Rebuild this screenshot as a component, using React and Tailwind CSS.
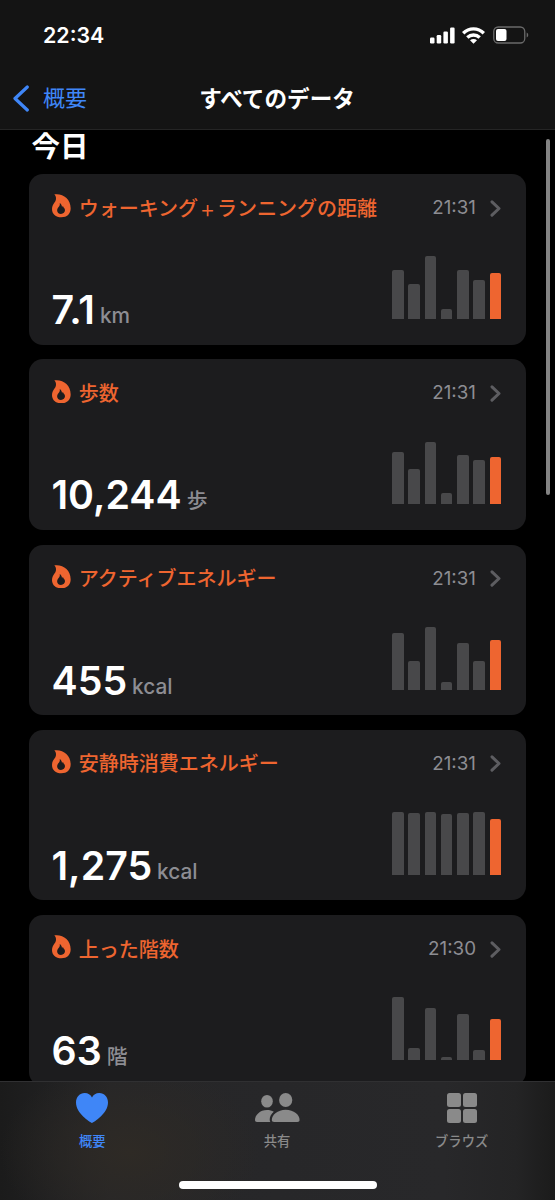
import React from 'react';

const cards = [
  { title: 'ウォーキング＋ランニングの距離', value: '7.1', unit: 'km', time: '21:31', bars: [49.3, 35, 63, 10, 49.3, 38.7, 46] },
  { title: '歩数', value: '10,244', unit: '歩', time: '21:31', bars: [52.3, 35.3, 62.5, 11, 49, 44.3, 47] },
  { title: 'アクティブエネルギー', value: '455', unit: 'kcal', time: '21:31', bars: [56.3, 29, 63, 7.3, 47, 29, 50] },
  { title: '安静時消費エネルギー', value: '1,275', unit: 'kcal', time: '21:31', bars: [62.3, 62, 62.3, 61, 62, 63, 56] },
  { title: '上った階数', value: '63', unit: '階', time: '21:30', bars: [62.7, 12, 52, 3.3, 46.3, 10, 41.3] },
];

const FlameIcon = () => (
  <svg className="h-[23.5px] w-[19px] shrink-0" viewBox="0 0 57 70.5" fill="#ee6530">
    <path
      fillRule="evenodd"
      d="M7 1C32-3 56 14 56 43C56 60 45 70 28 70C11 70 0 60 0 45C0 36 4 31 8 25C13 18 14 9 7 1ZM23 27C25 34 21 37 18 41C12 49 17 60 27 60C37 60 42 50 37 43C35 40 34 39 33 36C31 37 31 38 30 40C30 35 28 30 23 27Z"
    />
  </svg>
);

const StatusBar = () => (
  <div className="flex h-[70px] items-center justify-between pl-[43px] pr-[26px]">
    <span className="pt-px text-[21.4px] font-semibold leading-none">22:34</span>
    <div className="flex items-center">
      <svg className="h-[17px] w-[25px]" viewBox="0 0 25 17" fill="white">
        <rect x="0" y="10.5" width="4.5" height="6" rx="1.2" />
        <rect x="6.7" y="8" width="4.5" height="8.5" rx="1.2" />
        <rect x="13.4" y="4.5" width="4.5" height="12" rx="1.2" />
        <rect x="20.1" y="0.5" width="4.5" height="16" rx="1.2" />
      </svg>
      <svg className="ml-[7px] h-[17px] w-[23px]" viewBox="0 0 23 17" fill="none" stroke="white" strokeWidth="3.4">
        <path d="M1.2 6.2C7 .4 16 .4 21.8 6.2" />
        <path d="M5.3 10.6C8.9 7.2 14.1 7.2 17.7 10.6" />
        <path d="M11.5 16.8L8 13.3C10 11.5 13 11.5 15 13.3Z" fill="white" stroke="none" />
      </svg>
      <svg className="ml-[8px] h-[18px] w-[36px]" viewBox="0 0 36 18">
        <rect x="0.75" y="1" width="31" height="16" rx="4.5" fill="none" stroke="#6a6a6a" strokeWidth="1.3" />
        <rect x="3" y="3" width="10.5" height="12" rx="2" fill="white" />
        <path d="M33.7 6.5C35.7 7.3 35.7 10.7 33.7 11.5Z" fill="#6a6a6a" />
      </svg>
    </div>
  </div>
);

const Header = () => (
  <header className="h-[130px] shrink-0 border-b border-[#252525] bg-[#141414]">
    <StatusBar />
    <div className="grid h-[56px] grid-cols-3 items-center">
      <div className="flex items-center pl-[13px] text-[22px] text-[#3f86f7]">
        <svg className="mr-[14px] h-[27px] w-[16px]" viewBox="0 0 16 27" fill="none" stroke="currentColor" strokeWidth="3.2" strokeLinecap="round" strokeLinejoin="round">
          <path d="M14.3 2L2 13.5L14.3 25" />
        </svg>
        <span className="pt-px">概要</span>
      </div>
      <h1 className="-ml-px whitespace-nowrap pt-px text-center text-[22.6px] font-semibold">すべてのデータ</h1>
    </div>
  </header>
);

const CardTitle = ({ title }) => (
  <h3 className="ml-[7.7px] flex-1 whitespace-nowrap pt-[5px] text-[20px] font-medium leading-none text-[#ee6530]">
    {title.split('＋').map((part, i) => (
      <React.Fragment key={i}>
        {i > 0 && <span className="inline-block w-[19px] text-center text-[15px] font-bold">＋</span>}
        {part}
      </React.Fragment>
    ))}
  </h3>
);

const DataCard = ({ title, value, unit, time, bars }) => (
  <section className="flex h-[170.5px] shrink-0 flex-col justify-between rounded-[14px] bg-[#1c1c1e] pb-[25.5px] pl-[23px] pr-[25px] pt-[19px]">
    <div className="flex h-[26px] items-center">
      <FlameIcon />
      <CardTitle title={title} />
      <span className="mt-[5px] text-[18.8px] leading-none text-[#8d8d93]">{time}</span>
      <svg className="ml-[14px] mt-[4px] h-[17px] w-[11px]" viewBox="0 0 11 17" fill="none" stroke="#5d5d61" strokeWidth="3" strokeLinecap="round" strokeLinejoin="round">
        <path d="M2 1.8L9 8.5L2 15.2" />
      </svg>
    </div>
    <div className="flex items-end justify-between">
      <div className="-mb-[8px] -ml-[0.5px] flex items-baseline font-semibold leading-none">
        <span className="text-[39.3px] leading-[28px]">{value}</span>
        <span className="relative -top-px ml-[5px] text-[20.8px] font-medium leading-[20px] text-[#8d8d93]">{unit}</span>
      </div>
      <div className="flex h-[63px] items-end gap-[4.75px]">
        {bars.map((height, i) => (
          <div
            key={i}
            className={`w-[11.5px] rounded-t-[2px] ${i === bars.length - 1 ? 'bg-[#ee6530]' : 'bg-[#48484a]'}`}
            style={{ height }}
          />
        ))}
      </div>
    </div>
  </section>
);

const tabs = [
  {
    label: '概要',
    active: true,
    icon: (
      <svg className="h-[30px] w-[32px]" viewBox="0 0 32 30" fill="currentColor">
        <path d="M16 30C14 29 0 20.5 0 9.5C0 4 3.8 0 8.7 0C12 0 14.6 1.7 16 4.4C17.4 1.7 20 0 23.3 0C28.2 0 32 4 32 9.5C32 20.5 18 29 16 30Z" />
      </svg>
    ),
  },
  {
    label: '共有',
    icon: (
      <svg className="h-[30px] w-[45px]" viewBox="0 0 45 30" fill="currentColor">
        <ellipse cx="12" cy="8.3" rx="5.8" ry="6.3" />
        <path d="M2 29C.7 29 0 28.2 0 27C0 22 5 17 12 17C14.5 17 17 17.6 18.8 18.8C16.2 21 14.5 24 14.7 27C14.8 28 15 28.5 15.4 29Z" />
        <ellipse cx="30.7" cy="7" rx="6.6" ry="7" />
        <path d="M19.2 29C17.6 29 16.8 28.2 16.8 27C16.8 22 22.5 16.8 30.7 16.8C39 16.8 44.6 22 44.6 27C44.6 28.2 43.8 29 42.3 29Z" />
      </svg>
    ),
  },
  {
    label: 'ブラウズ',
    icon: (
      <svg className="h-[30px] w-[30px]" viewBox="0 0 30 30" fill="currentColor">
        <rect x="0" y="0" width="14" height="14" rx="2.5" />
        <rect x="16" y="0" width="14" height="14" rx="2.5" />
        <rect x="0" y="16" width="14" height="14" rx="2.5" />
        <rect x="16" y="16" width="14" height="14" rx="2.5" />
      </svg>
    ),
  },
];

const TabBar = () => (
  <nav className="flex h-[119px] shrink-0 flex-col items-center justify-between border-t border-[#303032] bg-[#242426] bg-[radial-gradient(ellipse_130px_90px_at_130px_70px,#2e2a25,transparent),linear-gradient(90deg,#1b1b1b,#262628_20%,#28282a_80%,#242425_93%,#1b1b1b)] pb-[11px] pt-[11px]">
    <div className="flex w-full pr-px">
      {tabs.map((tab) => (
        <div
          key={tab.label}
          className={`flex flex-1 flex-col items-center gap-[11px] ${tab.active ? 'text-[#3f86f7]' : 'text-[#8a8a8a]'}`}
        >
          {tab.icon}
          <span className="text-[13.3px] font-medium leading-[15px]">{tab.label}</span>
        </div>
      ))}
    </div>
    <div className="h-[8px] w-[198px] rounded-full bg-white" />
  </nav>
);

const App = () => (
  <div className="relative flex h-[1200px] w-[555px] flex-col overflow-hidden bg-black font-[Inter,'Noto_Sans_CJK_JP',sans-serif] text-white">
    <Header />
    <main className="min-h-0 flex-1 overflow-hidden px-[29px]">
      <h2 className="h-[44px] pl-[2.5px] text-[28.5px] font-bold leading-[34px]">今日</h2>
      <div className="flex flex-col gap-[14.75px]">
        {cards.map((card) => (
          <DataCard key={card.title} {...card} />
        ))}
      </div>
    </main>
    <TabBar />
    <div className="absolute right-[5px] top-[139px] h-[356px] w-[4.5px] rounded-full bg-[#848484]" />
  </div>
);

export default App;
